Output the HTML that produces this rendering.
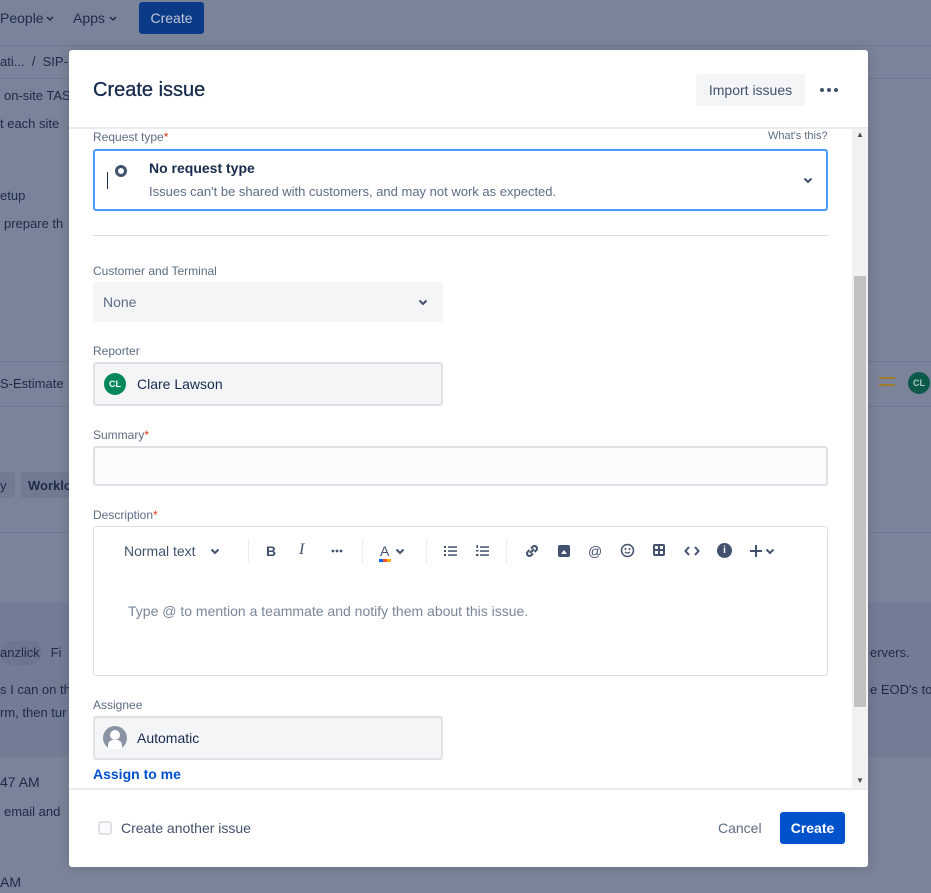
<!DOCTYPE html>
<html><head><meta charset="utf-8"><style>
*{box-sizing:border-box;margin:0;padding:0}
body{width:931px;height:893px;overflow:hidden;background:#7a8399;font-family:"Liberation Sans",sans-serif;position:relative;color:#172b4d}
.bg{position:absolute;color:#1d2a4a;font-size:13px;white-space:nowrap}
.m{position:absolute;left:69px;top:50px;width:799px;height:817px;background:#fff;border-radius:3px;box-shadow:0 0 12px rgba(0,0,0,.15)}
.a{position:absolute}
.lbl{position:absolute;left:24px;font-size:12px;color:#5e6c84}
.lbl b{color:#de350b;font-weight:normal}
.box{position:absolute;left:24px;background:#f4f5f7;border:2px solid #dfe1e6;border-radius:3px}
.tb{position:absolute;top:16px;font-size:14px;color:#42526e}
svg.c{position:absolute;width:10px;height:7px}
</style></head><body>
<div class="bg" style="left:0;top:10px;font-size:14px;color:#1e2c4c">People</div>
<svg class="c" style="left:45px;top:15px" viewBox="0 0 10 7"><path d="M2 2l3 3 3-3" fill="none" stroke="#1e2c4c" stroke-width="1.5"/></svg>
<div class="bg" style="left:73px;top:10px;font-size:14px">Apps</div>
<svg class="c" style="left:108px;top:15px" viewBox="0 0 10 7"><path d="M2 2l3 3 3-3" fill="none" stroke="#1e2c4c" stroke-width="1.5"/></svg>
<div class="a" style="left:139px;top:2px;width:65px;height:32px;background:#0b3a86;border-radius:3px;color:#c0c8d8;font-size:14px;text-align:center;line-height:32px">Create</div>
<div class="a" style="left:0;top:45px;width:931px;height:1px;background:#6e778f"></div>
<div class="bg" style="left:0;top:54px">ati... &nbsp;/ &nbsp;SIP-</div>
<div class="a" style="left:0;top:78px;width:931px;height:1px;background:#6e778f"></div>
<div class="bg" style="left:4px;top:88px">on-site TAS</div>
<div class="bg" style="left:0;top:116px">t each site</div>
<div class="bg" style="left:0;top:188px">etup</div>
<div class="bg" style="left:4px;top:216px">prepare th</div>
<div class="a" style="left:0;top:361px;width:931px;height:1px;background:#6e778f"></div>
<div class="bg" style="left:0;top:376px">S-Estimate</div>
<div class="a" style="left:0;top:406px;width:931px;height:1px;background:#6e778f"></div>
<div class="a" style="left:0;top:472px;width:15px;height:26px;background:#717a91;border-radius:3px"></div>
<div class="bg" style="left:0;top:478px">y</div>
<div class="a" style="left:21px;top:472px;width:50px;height:26px;background:#717a91;border-radius:3px"></div>
<div class="bg" style="left:28px;top:478px;font-weight:bold">Worklo</div>
<div class="a" style="left:0;top:532px;width:931px;height:1px;background:#6e778f"></div>
<div class="a" style="left:0;top:602px;width:931px;height:155px;background:#737c94"></div>
<div class="a" style="left:0;top:641px;width:42px;height:24px;background:#6c758d;border-radius:12px"></div>
<div class="bg" style="left:0;top:645px">anzlick &nbsp;&nbsp;Fi</div>
<div class="bg" style="left:0;top:682px">s I can on th</div>
<div class="bg" style="left:0;top:705px">rm, then tur</div>
<div class="bg" style="left:0;top:774px;font-size:14px">47 AM</div>
<div class="bg" style="left:4px;top:804px">email and</div>
<div class="bg" style="left:0;top:874px;font-size:14px">AM</div>
<div class="bg" style="left:870px;top:645px">ervers.</div>
<div class="bg" style="left:870px;top:682px">e EOD's to</div>
<div class="a" style="left:879px;top:377px;width:16px;height:2px;background:#a07a2c"></div>
<div class="a" style="left:879px;top:384px;width:16px;height:2px;background:#a07a2c"></div>
<div class="a" style="left:908px;top:372px;width:22px;height:22px;border-radius:50%;background:#0d5a4c;color:#a8c8c0;font-size:9px;text-align:center;line-height:22px;font-weight:bold">CL</div>

<div class="m">
 <div class="a" style="left:24px;top:29px;font-size:20px;color:#172b4d;-webkit-text-stroke:0.3px #172b4d">Create issue</div>
 <div class="a" style="left:627px;top:24px;width:109px;height:32px;background:#f4f5f7;border-radius:3px;font-size:14px;color:#42526e;text-align:center;line-height:32px">Import issues</div>
 <svg class="a" style="left:750px;top:37px" width="20" height="6" viewBox="0 0 20 6"><circle cx="3" cy="3" r="2" fill="#42526e"/><circle cx="10" cy="3" r="2" fill="#42526e"/><circle cx="17" cy="3" r="2" fill="#42526e"/></svg>
 <div class="a" style="left:0;top:77px;width:799px;height:2px;background:#ebecf0"></div>
 <div class="a" style="left:783px;top:79px;width:16px;height:660px;background:#f1f1f1"></div>
 <div class="a" style="left:785px;top:226px;width:12px;height:431px;background:#c1c1c1"></div>
 <div class="a" style="left:787px;top:80px;font-size:8px;color:#505050">▲</div>
 <div class="a" style="left:787px;top:726px;font-size:8px;color:#505050">▼</div>

 <div class="lbl" style="top:80px">Request type<b>*</b></div>
 <div class="a" style="left:699px;top:80px;font-size:11px;color:#5e6c84">What's this?</div>
 <div class="a" style="left:24px;top:99px;width:735px;height:62px;border:2px solid #4c9aff;border-radius:3px"></div>
 <div class="a" style="left:38px;top:122px;width:1px;height:17px;background:#172b4d"></div>
 <div class="a" style="left:46px;top:115px;width:12px;height:12px;border-radius:50%;border:3px solid #42526e"></div>
 <div class="a" style="left:80px;top:110px;font-size:14px;color:#172b4d;font-weight:bold">No request type</div>
 <div class="a" style="left:80px;top:134px;font-size:13px;color:#5e6c84">Issues can't be shared with customers, and may not work as expected.</div>
 <svg class="c" style="left:734px;top:127px" viewBox="0 0 10 7"><path d="M1.5 1.5l3.5 3.5 3.5-3.5" fill="none" stroke="#42526e" stroke-width="2"/></svg>
 <div class="a" style="left:24px;top:185px;width:735px;height:1px;background:#dfe1e6"></div>

 <div class="lbl" style="top:214px">Customer and Terminal</div>
 <div class="a" style="left:24px;top:232px;width:350px;height:40px;background:#f4f5f7;border-radius:3px"></div>
 <div class="a" style="left:34px;top:244px;font-size:14px;color:#5e6c84">None</div>
 <svg class="c" style="left:349px;top:249px" viewBox="0 0 10 7"><path d="M1.5 1.5l3.5 3.5 3.5-3.5" fill="none" stroke="#42526e" stroke-width="2"/></svg>

 <div class="lbl" style="top:294px">Reporter</div>
 <div class="box" style="top:312px;width:350px;height:44px"></div>
 <div class="a" style="left:35px;top:323px;width:22px;height:22px;border-radius:50%;background:#00875a;color:#fff;font-size:9px;font-weight:bold;text-align:center;line-height:22px">CL</div>
 <div class="a" style="left:68px;top:326px;font-size:14px;color:#172b4d">Clare Lawson</div>

 <div class="lbl" style="top:378px">Summary<b>*</b></div>
 <div class="box" style="top:396px;width:735px;height:40px;background:#fafbfc"></div>

 <div class="lbl" style="top:458px">Description<b>*</b></div>
 <div class="a" style="left:24px;top:476px;width:735px;height:150px;border:1px solid #dfe1e6;border-radius:3px">
  <div class="tb" style="left:30px">Normal text</div>
  <svg class="c" style="left:116px;top:21px" viewBox="0 0 10 7"><path d="M1.5 1.5l3.5 3.5 3.5-3.5" fill="none" stroke="#42526e" stroke-width="2"/></svg>
  <div class="a" style="left:154px;top:12px;width:1px;height:24px;background:#ebecf0"></div>
  <div class="tb" style="left:172px;font-weight:bold">B</div>
  <div class="tb" style="left:205px;font-style:italic;font-family:'Liberation Serif',serif;font-size:16px;top:14px">I</div>
  <svg class="a" style="left:237px;top:22px" width="12" height="4" viewBox="0 0 12 4"><circle cx="2" cy="2" r="1.4" fill="#42526e"/><circle cx="6" cy="2" r="1.4" fill="#42526e"/><circle cx="10" cy="2" r="1.4" fill="#42526e"/></svg>
  <div class="a" style="left:268px;top:12px;width:1px;height:24px;background:#ebecf0"></div>
  <div class="tb" style="left:286px">A</div>
  <svg class="c" style="left:301px;top:21px" viewBox="0 0 10 7"><path d="M1.5 1.5l3.5 3.5 3.5-3.5" fill="none" stroke="#42526e" stroke-width="2"/></svg>
  <div class="a" style="left:285px;top:32px;width:12px;height:3px;background:linear-gradient(90deg,#0065ff 33%,#ff5630 33% 66%,#ffab00 66%)"></div>
  <div class="a" style="left:332px;top:12px;width:1px;height:24px;background:#ebecf0"></div>
  <svg class="a" style="left:350px;top:18px" width="14" height="12" viewBox="0 0 14 12"><g fill="#42526e"><rect x="0" y="1" width="2" height="2"/><rect x="0" y="5" width="2" height="2"/><rect x="0" y="9" width="2" height="2"/><rect x="4" y="1.3" width="9" height="1.5"/><rect x="4" y="5.3" width="9" height="1.5"/><rect x="4" y="9.3" width="9" height="1.5"/></g></svg>
  <svg class="a" style="left:382px;top:18px" width="14" height="12" viewBox="0 0 14 12"><g fill="#42526e"><rect x="0.5" y="0" width="1.5" height="3"/><rect x="0" y="5" width="2.5" height="1.5"/><rect x="0" y="9" width="2.5" height="2"/><rect x="4" y="1.3" width="9" height="1.5"/><rect x="4" y="5.3" width="9" height="1.5"/><rect x="4" y="9.3" width="9" height="1.5"/></g></svg>
  <div class="a" style="left:412px;top:12px;width:1px;height:24px;background:#ebecf0"></div>
  <svg class="a" style="left:431px;top:17px" width="14" height="14" viewBox="0 0 14 14"><g fill="none" stroke="#42526e" stroke-width="2"><path d="M6 4.5l2-2a2.5 2.5 0 0 1 3.5 3.5l-2 2"/><path d="M8 9.5l-2 2a2.5 2.5 0 0 1-3.5-3.5l2-2"/><path d="M5 9l4-4"/></g></svg>
  <div class="a" style="left:464px;top:18px;width:12px;height:12px;background:#42526e;border-radius:2px"><div class="a" style="left:3px;top:5px;width:6px;height:4px;background:#fff;clip-path:polygon(0 100%,50% 0,100% 100%)"></div></div>
  <div class="tb" style="left:494px">@</div>
  <svg class="a" style="left:526px;top:16px" width="15" height="15" viewBox="0 0 15 15"><circle cx="7.5" cy="7.5" r="6" fill="none" stroke="#42526e" stroke-width="1.5"/><circle cx="5.5" cy="6" r="1" fill="#42526e"/><circle cx="9.5" cy="6" r="1" fill="#42526e"/><path d="M5 9q2.5 2 5 0" fill="none" stroke="#42526e" stroke-width="1.3"/></svg>
  <div class="a" style="left:559px;top:17px;width:12px;height:12px;border:2px solid #42526e;border-radius:2px;background:linear-gradient(#42526e,#42526e) center/2px 100% no-repeat,linear-gradient(#42526e,#42526e) center/100% 2px no-repeat"></div>
  <svg class="a" style="left:590px;top:18px" width="16" height="12" viewBox="0 0 16 12"><path d="M5 2L1.5 6 5 10M11 2l3.5 4L11 10" fill="none" stroke="#42526e" stroke-width="2"/></svg>
  <div class="a" style="left:623px;top:16px;width:15px;height:15px;border-radius:50%;background:#42526e;color:#fff;font-size:10px;font-weight:bold;text-align:center;line-height:15px">i</div>
  <svg class="a" style="left:656px;top:18px" width="12" height="12" viewBox="0 0 12 12"><path d="M6 0v12M0 6h12" stroke="#42526e" stroke-width="2"/></svg>
  <svg class="c" style="left:671px;top:21px" viewBox="0 0 10 7"><path d="M1.5 1.5l3.5 3.5 3.5-3.5" fill="none" stroke="#42526e" stroke-width="2"/></svg>
  <div class="a" style="left:34px;top:76px;font-size:14px;color:#7a869a">Type @ to mention a teammate and notify them about this issue.</div>
 </div>

 <div class="lbl" style="top:648px">Assignee</div>
 <div class="box" style="top:666px;width:350px;height:44px"></div>
 <div class="a" style="left:34px;top:676px;width:24px;height:24px;border-radius:50%;background:#8993a4;overflow:hidden">
  <div class="a" style="left:7px;top:4px;width:10px;height:10px;border-radius:50%;background:#fff"></div>
  <div class="a" style="left:5px;top:14px;width:14px;height:12px;border-radius:5px 5px 0 0;background:#fff"></div>
 </div>
 <div class="a" style="left:68px;top:680px;font-size:14px;color:#172b4d">Automatic</div>
 <div class="a" style="left:24px;top:716px;font-size:14px;color:#0052cc;font-weight:bold">Assign to me</div>

 <div class="a" style="left:0;top:738px;width:799px;height:2px;background:#ebecf0"></div>
 <div class="a" style="left:29px;top:771px;width:14px;height:14px;border:2px solid #dfe1e6;border-radius:3px;background:#fafbfc"></div>
 <div class="a" style="left:52px;top:770px;font-size:14px;color:#42526e">Create another issue</div>
 <div class="a" style="left:649px;top:770px;font-size:14px;color:#5e6c84">Cancel</div>
 <div class="a" style="left:711px;top:762px;width:65px;height:32px;background:#0052cc;border-radius:3px;color:#fff;font-size:14px;font-weight:bold;text-align:center;line-height:32px">Create</div>
</div>
</body></html>
